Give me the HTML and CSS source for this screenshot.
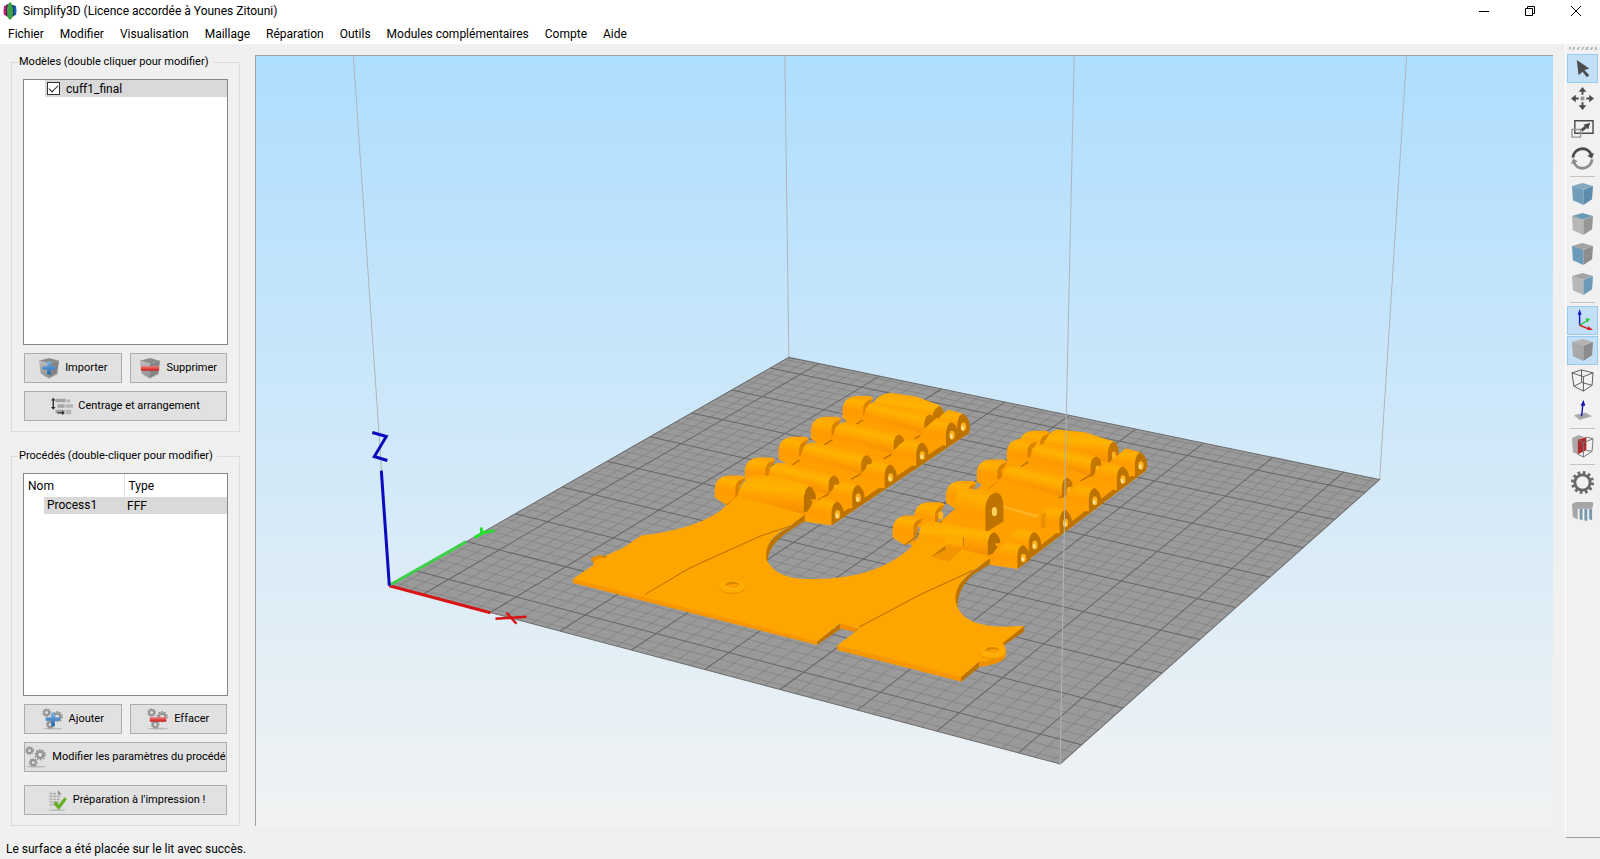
FILE: index.html
```html
<!DOCTYPE html>
<html lang="fr">
<head>
<meta charset="utf-8">
<title>Simplify3D</title>
<link rel="stylesheet" href="styles.css">
</head>
<body>
<svg class="defs" aria-hidden="true">
  <defs>
    <linearGradient id="cubeLeft" x1="0" y1="0" x2="0" y2="1"><stop offset="0" stop-color="#bdbdbd"/><stop offset="1" stop-color="#8f8f8f"/></linearGradient>
    <linearGradient id="blueBar" x1="0" y1="0" x2="0" y2="1"><stop offset="0" stop-color="#7db4e6"/><stop offset="1" stop-color="#2167ad"/></linearGradient>
    <linearGradient id="redBar" x1="0" y1="0" x2="0" y2="1"><stop offset="0" stop-color="#f47b78"/><stop offset="1" stop-color="#c81c1c"/></linearGradient>
    <linearGradient id="barrelShade" gradientUnits="userSpaceOnUse" x1="100" y1="-20" x2="84" y2="46"><stop offset="0" stop-color="#ffa400"/><stop offset=".3" stop-color="#ffb300"/><stop offset=".6" stop-color="#ffa000"/><stop offset="1" stop-color="#f08900"/></linearGradient>
    <linearGradient id="round" x1=".6" y1="0" x2=".4" y2="1"><stop offset="0" stop-color="#ffa400"/><stop offset=".35" stop-color="#ffb300"/><stop offset=".6" stop-color="#ff9e00"/><stop offset="1" stop-color="#f08a00"/></linearGradient>
    <linearGradient id="roundSide" x1=".6" y1="0" x2=".4" y2="1"><stop offset="0" stop-color="#ffa200"/><stop offset=".2" stop-color="#ffb000"/><stop offset=".55" stop-color="#ff9b00"/><stop offset="1" stop-color="#ffa200"/></linearGradient>
    <symbol id="cog" viewBox="0 0 24 24">
      <circle cx="12" cy="12" r="6.5" fill="none" stroke="#949494" stroke-width="5"/>
      <circle cx="12" cy="12" r="10" fill="none" stroke="#949494" stroke-width="3.4" stroke-dasharray="3.14 3.14"/>
    </symbol>
    <symbol id="cogs" viewBox="0 0 24 24">
      <ellipse cx="12" cy="22.500" rx="11" ry="1" fill="#bcbcbc"/>
      <use href="#cog" x="0" y="0" width="10" height="10"/>
      <use href="#cog" x="10" y="3" width="13" height="13"/>
      <use href="#cog" x="4" y="13" width="10" height="10"/>
    </symbol>
    <symbol id="box" viewBox="0 0 24 24">
      <path d="M4 20 12 24 22 19 22 17Z" fill="#aaa" opacity=".5"/>
      <path d="M1 4 12 1 23 4 12 7Z" fill="#8b8b8b"/>
      <path d="M1 4 12 7V23L3 18Z" fill="url(#cubeLeft)"/>
      <path d="M23 4 12 7V23L21 18Z" fill="#858585"/>
    </symbol>
    <symbol id="leftKnuckle" overflow="visible">
      <path d="M0 0V-25Q2-63 42-66L78-66Q92-63 90-56L82-44 70-22 64 14 35 22Z" fill="url(#roundSide)"/>
      <path d="M62 14V-32Q66-54 90-57L82-42 73-34 78-22 68-4Z" fill="#d88200"/>
      <path d="M36 22 82-10" stroke="#b56e00" stroke-width="4"/>
    </symbol>
    <symbol id="barrel" overflow="visible">
      <path d="M-4 4Q0-32 32-34L178-2Q206 6 207 28L178 62-30 14Z" fill="#ff9b00"/>
      <path d="M-2 0Q3-33 34-34L178-2Q206 6 207 28L178 62Z" fill="url(#barrelShade)"/>
      <path d="M176 64V27Q180 3 194 4Q209 11 208 29L199 32 190 42 190 58Z" fill="#c47700"/>
      <path d="M146 76 182 56" stroke="#b56e00" stroke-width="4"/>
      <ellipse cx="197" cy="38" rx="5" ry="7" fill="#ffb21f"/>
    </symbol>
    <symbol id="rightKnuckle" overflow="visible">
      <path d="M-86-12-68-48-28-84 12-73Q28-65 20-40L0 0Z" fill="url(#roundSide)"/>
      <path d="M0 0V-42Q4-70 18-71Q37-58 37-33V-25Z" fill="#bd7300"/>
      <ellipse cx="18" cy="-32" rx="8" ry="13" fill="#ffb21f"/><ellipse cx="16" cy="-28" rx="4" ry="7" fill="#ffe39a"/>
    </symbol>
    <symbol id="washer" overflow="visible">
      <ellipse rx="40" ry="20" cy="3" fill="#f09200"/>
      <ellipse rx="39" ry="19" fill="#ffac00"/>
      <ellipse rx="22" ry="10" cy="-3" fill="#ff9f00"/>
      <path d="M-23-2Q-18-14 0-14 16-13 22-5 6-9-4-6-14-5-23-2Z" fill="#d98400"/>
      <path d="M-23 0Q-10 9 8 7 20 5 23-3" fill="none" stroke="#ffb920" stroke-width="3"/>
    </symbol>
  </defs>
</svg>

<header class="titlebar">
  <svg class="logo" viewBox="0 0 14 18" aria-hidden="true"><path d="M1 4 4 3V14L1 13Q0 9 1 4Z" fill="#b0216f"/><path d="M3 3 5 2V15L3 14Z" fill="#5b2358"/><path d="M10 3 13 4Q14 9 13 13L10 14Z" fill="#1e5fae"/><path d="M9 3 11 3V14L9 15Z" fill="#163f66"/><path d="M5 2 7 0 9 2Q11 9 9 16L7 18 5 16Q3 9 5 2Z" fill="#3fa046"/></svg>
  <h1 class="app-title">Simplify3D (Licence accordée à Younes Zitouni)</h1>
  <div class="window-buttons">
    <button aria-label="Réduire"><svg viewBox="0 0 12 12"><path d="M1 6.500H11" /></svg></button>
    <button aria-label="Restaurer"><svg viewBox="0 0 12 12"><path d="M1.500 3.500H8.500V10.500H1.500ZM3.500 3.500V1.500H10.500V8.500H8.500"/></svg></button>
    <button aria-label="Fermer"><svg viewBox="0 0 12 12"><path d="M1 1 11 11M11 1 1 11"/></svg></button>
  </div>
</header>
<nav class="menubar">
  <button>Fichier</button><button>Modifier</button><button>Visualisation</button><button>Maillage</button><button>Réparation</button><button>Outils</button><button>Modules complémentaires</button><button>Compte</button><button>Aide</button>
</nav>

<main class="workspace">
  <aside class="sidebar">
    <fieldset class="group">
      <legend>Modèles (double cliquer pour modifier)</legend>
      <div class="list">
        <label class="model-row"><input type="checkbox" checked><span>cuff1_final</span></label>
      </div>
      <div class="button-row">
        <button class="btn"><svg viewBox="0 0 24 24"><use href="#box"/><path d="M10 5H14V10H19V14H14V19H10V14H5V10H10Z" fill="url(#blueBar)"/></svg>Importer</button>
        <button class="btn"><svg viewBox="0 0 24 24"><use href="#box"/><path d="M2 10H22V15H2Z" fill="url(#redBar)"/></svg>Supprimer</button>
      </div>
      <button class="btn"><svg viewBox="0 0 24 24"><path d="M5 4H16V8H5ZM7 10H15V14H7ZM5 16H15V20H5Z" fill="#a3a3a3"/><path d="M17 5H21V8H17ZM16 10H24V14H16ZM16 16H22V21H16Z" fill="#b5b5b5"/><path d="M2.500 5V14M7 19.500H13" stroke="#2f2f2f" stroke-width="1.500"/><path d="M0 6 2.500 3 5 6ZM0 13 2.500 16 5 13ZM12 17 15 19.500 12 22Z" fill="#2f2f2f"/></svg>Centrage et arrangement</button>
    </fieldset>
    <fieldset class="group">
      <legend>Procédés (double-cliquer pour modifier)</legend>
      <div class="list">
        <table class="process-table">
          <thead><tr><th class="col-name">Nom</th><th>Type</th></tr></thead>
          <tbody><tr><td class="process-name"><span>Process1</span></td><td class="process-type">FFF</td></tr></tbody>
        </table>
      </div>
      <div class="button-row">
        <button class="btn"><svg viewBox="0 0 24 24"><use href="#cogs"/><path d="M10 5H14V10H20V14H14V20H10V14H4V10H10Z" fill="url(#blueBar)"/></svg>Ajouter</button>
        <button class="btn"><svg viewBox="0 0 24 24"><use href="#cogs"/><path d="M3 10H21V15H3Z" fill="url(#redBar)"/></svg>Effacer</button>
      </div>
      <button class="btn"><svg viewBox="0 0 24 24"><use href="#cogs"/></svg>Modifier les paramètres du procédé</button>
      <button class="btn btn-prepare"><svg viewBox="0 0 24 24"><ellipse cx="12" cy="23" rx="10" ry="1" fill="#bbb"/><path d="M3 2H13L17 6V22H3Z" fill="#dcdcdc"/><path d="M13 1 17 6H13Z" fill="#888"/><path d="M4 5H11M4 8H15M4 11H15M4 14H14M4 17H12" stroke="#a5a5a5" stroke-width="1.500" stroke-dasharray="3 1"/><path d="M8 16 11 13 14 17 20 9 23 11 14 23Z" fill="#68ae26"/></svg>Préparation à l'impression !</button>
    </fieldset>
  </aside>

  <section class="viewport" aria-label="Vue 3D">
    <svg class="scene" viewBox="256 57 1297 769" preserveAspectRatio="xMidYMid slice">
      <path d="M390 586 354 56M789 358 785 56M1379 480 1406 56" class="frame-line"/>
      <path d="M390 586 789 358 1379 480 1060 764Z" fill="#9a9a9a"/>
      <g id="grid"></g>
      <path d="M390 586 789 358 1379 480 1060 764Z" class="bed-edge"/>
      <path d="M390 586 491 613" stroke="#d81414" stroke-width="3"/>
      <path d="M496 619 527 617M507 613 517 624" stroke="#d81414" stroke-width="2.500"/>
      <path d="M391 585 467 542" stroke="#3fd04a" stroke-width="3"/>
      <path d="M475 538 484 533 495 531M482 528V533" stroke="#22e02c" stroke-width="3" fill="none"/>
      <path d="M382 471 390 586" stroke="#0b0bbd" stroke-width="3"/>
      <path d="M373 433 387 437 375 457 388 461" stroke="#0b0bbd" stroke-width="3" fill="none"/>

      <!-- left strap -->
      <g transform="translate(690 380) scale(.3333)">
        <path d="M120 365 300 245 540 75 600 60 760 105 838 140 838 160 425 437 345 425Z" fill="#ff9f00"/>
        <path d="M425 437 838 160V143L440 411Z" fill="#bd7300"/>
        <use href="#leftKnuckle" x="458" y="116"/>
        <path d="M548 80Q560 42 605 41L680 52 745 76Q765 88 762 118L735 145Z" fill="url(#round)"/>
        <path d="M727 150V110Q732 84 750 80Q765 92 762 118L745 128Z" fill="#c47700"/>
        <use href="#rightKnuckle" x="802" y="174"/>
        <use href="#barrel" x="527" y="102"/>
        <use href="#leftKnuckle" x="363" y="178"/>
        <use href="#rightKnuckle" x="768" y="199"/>
        <use href="#barrel" x="435" y="162"/>
        <use href="#leftKnuckle" x="266" y="238"/>
        <use href="#rightKnuckle" x="679" y="260"/>
        <use href="#barrel" x="338" y="223"/>
        <use href="#leftKnuckle" x="165" y="300"/>
        <use href="#rightKnuckle" x="584" y="326"/>
        <use href="#barrel" x="240" y="284"/>
        <use href="#leftKnuckle" x="75" y="354"/>
        <use href="#rightKnuckle" x="487" y="387"/>
        <path d="M140 360Q155 290 205 286L270 292 350 315Q382 330 377 360L345 405Z" fill="url(#round)"/>
        <path d="M342 398V355Q346 322 360 320Q382 338 377 360L360 360 368 368 355 395Z" fill="#b87000"/>
        <use href="#rightKnuckle" x="425" y="437"/>
      </g>
      <!-- right strap -->
      <g transform="translate(880 420) scale(.3333)">
        <path d="M90 375 200 290 400 110 500 50 700 100 798 135V152L410 447 330 430Z" fill="#ff9f00"/>
        <path d="M410 447 798 152V134L425 420Z" fill="#bd7300"/>
        <use href="#leftKnuckle" x="418" y="100"/>
        <path d="M490 78Q505 34 530 30L615 38 700 66Q718 80 716 105L690 130Z" fill="url(#round)"/>
        <path d="M683 133V95Q688 68 702 66Q718 80 716 105L704 112Z" fill="#c47700"/>
        <ellipse cx="701" cy="108" rx="6" ry="12" fill="#ffb21f"/>
        <use href="#rightKnuckle" x="764" y="170"/>
        <use href="#leftKnuckle" x="380" y="124"/>
        <use href="#barrel" x="455" y="108"/>
        <use href="#rightKnuckle" x="710" y="212"/>
        <use href="#leftKnuckle" x="290" y="186"/>
        <path d="M320 212 360 182 552 240 545 258 480 290 365 262Z" fill="#ffa000"/>
        <use href="#barrel" x="369" y="171"/>
        <use href="#rightKnuckle" x="626" y="276"/>
        <path d="M320 212 366 182 548 240 480 290 365 262Z" fill="#ff9f00"/>
        <use href="#leftKnuckle" x="198" y="250"/>
        <path d="M360 262 368 258 482 288 472 296Z" fill="#ffb21f"/>
        <use href="#rightKnuckle" x="538" y="342"/>
        <path d="M483 330V285L496 278V322Z" fill="#e99000"/>
        <use href="#leftKnuckle" x="103" y="314"/>
        <ellipse cx="182" cy="288" rx="8" ry="12" fill="#ffb21f"/>
        <path d="M226 315V235Q236 207 262 206L350 218 335 340Z" fill="url(#roundSide)"/>
        <path d="M316 335V262Q322 222 350 219Q370 226 370 262V305L318 338Z" fill="#bf7400"/>
        <ellipse cx="343" cy="276" rx="8" ry="14" fill="#ffd15c"/>
        <use href="#rightKnuckle" x="446" y="408"/>
        <use href="#leftKnuckle" x="38" y="354"/>
        <path d="M115 352Q120 308 155 305L335 337Q360 345 360 370L325 405 100 370Z" fill="url(#round)"/>
        <path d="M323 407V368Q328 338 343 338Q360 350 361 370L343 372 352 382 338 402Z" fill="#b87000"/>
        <path d="M200 346 250 352V380L193 370Z" fill="#ffab00"/><path d="M250 352V380" stroke="#c47700" stroke-width="3"/>
        <use href="#rightKnuckle" x="412" y="447"/>
      </g>
      <!-- flat plate -->
      <g transform="translate(560 480) scale(.3333)">
        <path d="M40 298V310L772 496V485L400 370Z" fill="#f79600"/>
        <path d="M772 484V496L842 447V431Z" fill="#bd7300"/>
        <path d="M840 431V446L885 457 900 440Z" fill="#f08e00"/>
        <path d="M832 497V511L1205 606V590Z" fill="#f79600"/>
        <path d="M1203 590V606L1257 563V546Z" fill="#bd7300"/>
        <path d="M1257 545V562Q1335 552 1338 525V510Z" fill="#ef9000"/>
        <path d="M1326 485V500L1392 456V439Z" fill="#bd7300"/>
        <path d="M735 103V124L690 153Q625 195 622 250L613 225Q625 175 685 145Z" fill="#bd7300"/>
        <path d="M1290 234V253L1241 284Q1192 325 1192 385L1182 350Q1190 310 1240 275Z" fill="#bd7300"/>
        <path d="M95 242Q90 230 130 225V235L110 256Z" fill="#e78d00"/>
        <path d="M40 298 102 256Q98 242 125 234Q165 216 190 205L245 168Q400 150 480 95L535 48 735 105 685 143Q610 180 620 240Q650 300 750 298Q940 300 1045 210L1085 170 1290 235 1240 273Q1180 315 1187 365Q1200 440 1330 441L1392 439 1328 490Q1345 510 1330 522Q1310 540 1257 546L1203 592 832 497 898 447 840 431 772 485Z" fill="#ffa500"/>
        <path d="M255 345 390 265 600 170 690 140M898 442 1080 345 1240 272" fill="none" stroke="#bd7300" stroke-width="3"/>
        <path d="M1112 231 1156 212V196L1207 208 1165 246Z" fill="#f39500"/><path d="M1112 231 1156 212V198Z" fill="#c87b00"/>
        <path d="M120 236 135 228 145 233Z" fill="#c87b00"/>
        <use href="#washer" x="518" y="320"/>
        <use href="#washer" x="1297" y="516"/>
      </g>
      <path d="M1060 764 1066 420M1066 420 1074 56" class="frame-line"/>
    </svg>
  </section>

  <div class="toolbar" role="toolbar" aria-label="Outils de vue">
    <span class="grip"></span>
    <button class="tool active" aria-label="Sélection"><svg viewBox="0 0 24 24"><path d="M6 3 19 12 14 13.500 19 19 16.500 21 12 15.500 8 19Z" fill="#4b4b4b"/></svg></button>
    <button class="tool" aria-label="Déplacer"><svg viewBox="0 0 24 24" fill="#4b4b4b"><path d="M12 0 16 5H13V8H11V5H8ZM12 24 8 19H11V16H13V19H16ZM0 12 5 8V11H8V13H5V16ZM24 12 19 16V13H16V11H19V8Z"/><path d="M10 10H14V14H10Z" fill="#999"/></svg></button>
    <button class="tool" aria-label="Échelle"><svg viewBox="0 0 24 24" fill="none"><path d="M4 4H23V17H4Z" stroke="#4b4b4b" stroke-width="1.500"/><path d="M1 13H10V21H1Z" stroke="#999" stroke-width="1.500"/><path d="M11 14 16 10" stroke="#4b4b4b" stroke-width="3"/><path d="M20 6 18 13 13 8Z" fill="#4b4b4b"/></svg></button>
    <button class="tool" aria-label="Rotation"><svg viewBox="0 0 24 24" fill="none" stroke-width="3"><path d="M2 11C3 1 17-2 21 8" stroke="#4b4b4b"/><path d="M24 6 22 12 17 9Z" fill="#4b4b4b"/><path d="M22 13C21 23 7 26 3 16" stroke="#8c8c8c"/><path d="M0 18 2 12 7 15Z" fill="#8c8c8c"/></svg></button>
    <hr>
    <button class="tool" aria-label="Vue par défaut"><svg viewBox="0 0 24 24"><path d="M1 3 12 0 23 3 12 7Z" fill="#82a9c0"/><path d="M1 3 13 7V23L2 18Z" fill="#729db8"/><path d="M23 3 13 7V23L22 17Z" fill="#5d8dab"/></svg></button>
    <button class="tool" aria-label="Vue de dessus"><svg viewBox="0 0 24 24"><path d="M1 3 12 0 23 3 12 7Z" fill="#6b9bb9"/><path d="M1 3 13 7V23L2 18Z" fill="#b7b7b7"/><path d="M23 3 13 7V23L22 17Z" fill="#969696"/></svg></button>
    <button class="tool" aria-label="Vue de face"><svg viewBox="0 0 24 24"><path d="M1 3 12 0 23 3 12 7Z" fill="#a3a3a3"/><path d="M1 3 13 7V23L2 18Z" fill="#6b9bb9"/><path d="M23 3 13 7V23L22 17Z" fill="#8d8d8d"/></svg></button>
    <button class="tool" aria-label="Vue de côté"><svg viewBox="0 0 24 24"><path d="M1 3 12 0 23 3 12 7Z" fill="#a3a3a3"/><path d="M1 3 13 7V23L2 18Z" fill="#b7b7b7"/><path d="M23 3 13 7V23L22 17Z" fill="#6b9bb9"/></svg></button>
    <hr>
    <button class="tool active" aria-label="Axes"><svg viewBox="0 0 24 24" fill="none" stroke-width="1.500"><path d="M9 17V4" stroke="#1414c8"/><path d="M7 6 9 0 11 6Z" fill="#1414c8"/><path d="M9 17 17 12" stroke="#28c83c"/><path d="M15 10 20 10 17 14Z" fill="#28c83c"/><path d="M9 17 19 21" stroke="#d22020"/><path d="M18 18 23 22 17 22Z" fill="#d22020"/></svg></button>
    <button class="tool active" aria-label="Modèle plein"><svg viewBox="0 0 24 24"><path d="M1 3 12 0 23 3 12 7Z" fill="#b4b4b4"/><path d="M1 3 13 7V23L2 18Z" fill="#a9a9a9"/><path d="M23 3 13 7V23L22 17Z" fill="#8c8c8c"/></svg></button>
    <button class="tool" aria-label="Fil de fer"><svg viewBox="0 0 24 24" fill="none" stroke="#5a5a5a"><path d="M1 4 11 1 23 4 13 8ZM1 4 3 18 13 23 22 17 23 4M13 8V23M11 1V14L3 18M11 14 22 17"/></svg></button>
    <button class="tool" aria-label="Normales"><svg viewBox="0 0 24 24"><path d="M3 17 15 14 22 18 9 22Z" fill="#aaa"/><path d="M11 18 12.500 5" stroke="#1414b4" stroke-width="1.500"/><path d="M10 7 13 1 15 7Z" fill="#1414b4"/></svg></button>
    <hr>
    <button class="tool" aria-label="Coupe"><svg viewBox="0 0 24 24"><path d="M1 3 8 0 14 2 7 5V20L2 18Z" fill="#aaa"/><path d="M7 5 16 2V16L7 20Z" fill="#ae2c2c"/><path d="M16 2 23 4 13 8V23L22 17 23 4M7 5 13 8M7 20 13 23M16 16 22 17" fill="none" stroke="#777"/></svg></button>
    <hr>
    <button class="tool" aria-label="Réglages"><svg viewBox="0 0 24 24" fill="none" stroke="#686868"><circle cx="12" cy="12" r="8" stroke-width="3"/><circle cx="12" cy="12" r="10.500" stroke-width="3" stroke-dasharray="2.750 2.750"/></svg></button>
    <button class="tool" aria-label="Supports"><svg viewBox="0 0 24 24"><path d="M1 3 5 1 23 1V6L21 8H7V19L2 17Z" fill="#a6a6a6"/><path d="M9 8H12V20L9 19ZM14 8H17V21L14 20ZM19 8H22V20L19 19Z" fill="#7898ab"/></svg></button>
  </div>
</main>
<footer class="statusbar">Le surface a été placée sur le lit avec succès.</footer>
<script src="grid.js"></script>
</body>
</html>
```
FILE: styles.css
```css
* { box-sizing: border-box; }
body {
  margin: 0;
  height: 100vh;
  display: flex;
  flex-direction: column;
  background: #f0f0f0;
  color: #000;
  font: 12px/16px Roboto, "Open Sans", sans-serif;
}
button { font: inherit; color: inherit; border: 0; background: none; padding: 0; }
svg { display: block; }
.defs { position: absolute; width: 0; height: 0; }

.titlebar { display: flex; align-items: center; height: 22px; padding-left: 3px; background: #fff; }
.logo { width: 14px; height: 18px; margin-right: 6px; }
.app-title { margin: 0; font-size: 12px; font-weight: 400; }
.window-buttons { display: flex; margin-left: auto; }
.window-buttons button { display: flex; justify-content: center; align-items: center; width: 45px; height: 20px; }
.window-buttons button:first-child { width: 46px; }
.window-buttons button:last-child { width: 48px; }
.window-buttons svg { width: 12px; height: 12px; fill: none; stroke: #000; }

.menubar { display: flex; height: 22px; padding-top: 2px; background: #fff; }
.menubar button { padding: 0 8px; }

.workspace { flex: 1; display: flex; min-height: 0; }
.sidebar { display: flex; flex-direction: column; gap: 16px; width: 240px; padding: 10px 0 12px 11px; margin-right: 15px; font-size: 11px; }
.group {
  flex: 1;
  display: flex;
  flex-direction: column;
  gap: 8px;
  min-width: 0;
  min-height: 0;
  margin: 0;
  padding: 9px 11px 10px;
  border: 1px solid #dcdcdc;
}
.group legend { margin-left: -5px; padding: 0 4px 0 1px; white-space: nowrap; }
.list { flex: 1; min-height: 0; border: 1px solid #828790; background: #fff; font-size: 12px; }
.model-row { display: flex; align-items: center; gap: 6px; height: 17px; margin-left: 21px; padding-left: 2px; background: #d9d9d9; }
.model-row input { appearance: none; width: 13px; height: 13px; margin: 0; border: 1px solid #333; background: #fff; display: grid; place-items: center; }
.model-row input:checked::after { content: ""; width: 8px; height: 4px; margin-bottom: 3px; border: solid #222; border-width: 0 0 1px 1px; transform: rotate(-45deg); }
.button-row { display: flex; gap: 6px; }
.button-row .btn { flex: 1; }
.btn { display: flex; align-items: center; justify-content: center; gap: 5px; height: 30px; margin: 0 1px; border: 1px solid #adadad; background: #e1e1e1; white-space: nowrap; }
.btn svg { width: 22px; height: 22px; flex: none; }
.btn-prepare { margin-top: 5px; }
.process-table { width: 100%; border-collapse: collapse; table-layout: fixed; }
.process-table th { height: 23px; padding: 0 4px; text-align: left; font-weight: 400; }
.process-table .col-name { width: 100px; border-right: 1px solid #e0e0e0; }
.process-table td { height: 17px; padding: 0; }
.process-name span { display: block; margin-left: 20px; padding-left: 3px; background: #d9d9d9; height: 17px; }
.process-table .process-type { padding-left: 3px; background: #d9d9d9; }

.viewport {
  flex: 1;
  min-width: 0;
  margin: 11px 0 12px;
  border: solid #a0a0a0;
  border-width: 1px 0 0 1px;
  background: linear-gradient(#aedeff, #f2f3f3);
  overflow: hidden;
}
.scene { width: 100%; height: 100%; }
.frame-line { fill: none; stroke: #b0b5b8; stroke-width: 1; }
.bed-edge { fill: none; stroke: #6c6c6c; }
.grid-minor { stroke: #7f7f7f; stroke-width: 1; opacity: .6; }
.grid-major { stroke: #666; stroke-width: 1; }

.toolbar { display: flex; flex-direction: column; gap: 1px; width: 35px; margin: 0 0 0 12px; padding: 3px 1px 0; border-left: 1px solid #fff; border-bottom: 1px solid #a0a0a0; background: #f1f1f1; }
.grip { height: 3px; margin: 0 2px 3px; background: repeating-linear-gradient(115deg, #bbb 0 2px, transparent 2px 4px); }
.tool { display: flex; align-items: center; justify-content: center; width: 31px; height: 29px; border: 1px solid transparent; }
.tool svg { width: 23px; height: 23px; }
.tool.active { border-color: #99cbf0; background: #c2dff5; }
.toolbar hr { width: 25px; height: 1px; margin: 2px 3px; border: 0; background: #c4c4c4; }

.statusbar { height: 21px; padding: 3px 6px 0; }
```
FILE: grid.js
```js
// Projects the build plate's square onto its four corners on screen.
const corners = [[390, 586], [1060, 764], [1379, 480], [789, 358]];
const [a, b, c, d] = corners;
const dx1 = b[0] - c[0], dx2 = d[0] - c[0], dx3 = a[0] - b[0] + c[0] - d[0];
const dy1 = b[1] - c[1], dy2 = d[1] - c[1], dy3 = a[1] - b[1] + c[1] - d[1];
const det = dx1 * dy2 - dx2 * dy1;
const g = (dx3 * dy2 - dx2 * dy3) / det;
const h = (dx1 * dy3 - dx3 * dy1) / det;

function project(u, v) {
  const w = g * u + h * v + 1;
  return [0, 1].map(i =>
    ((b[i] - a[i] + g * b[i]) * u + (d[i] - a[i] + h * d[i]) * v + a[i]) / w);
}

const grid = document.getElementById("grid");
function addLine(from, to, cls) {
  const line = document.createElementNS("http://www.w3.org/2000/svg", "path");
  line.setAttribute("d", `M${project(...from)}L${project(...to)}`);
  line.setAttribute("class", cls);
  grid.append(line);
}

const cells = 9, step = 5;
for (const major of [false, true]) {
  for (let i = -22; i <= 22; i++) {
    if ((i % step === 0) !== major) continue;
    // lines are counted from the centre of the plate
    const t = 0.5 + i / (cells * step);
    const cls = major ? "grid-major" : "grid-minor";
    addLine([t, 0], [t, 1], cls);
    addLine([0, t], [1, t], cls);
  }
}
```
